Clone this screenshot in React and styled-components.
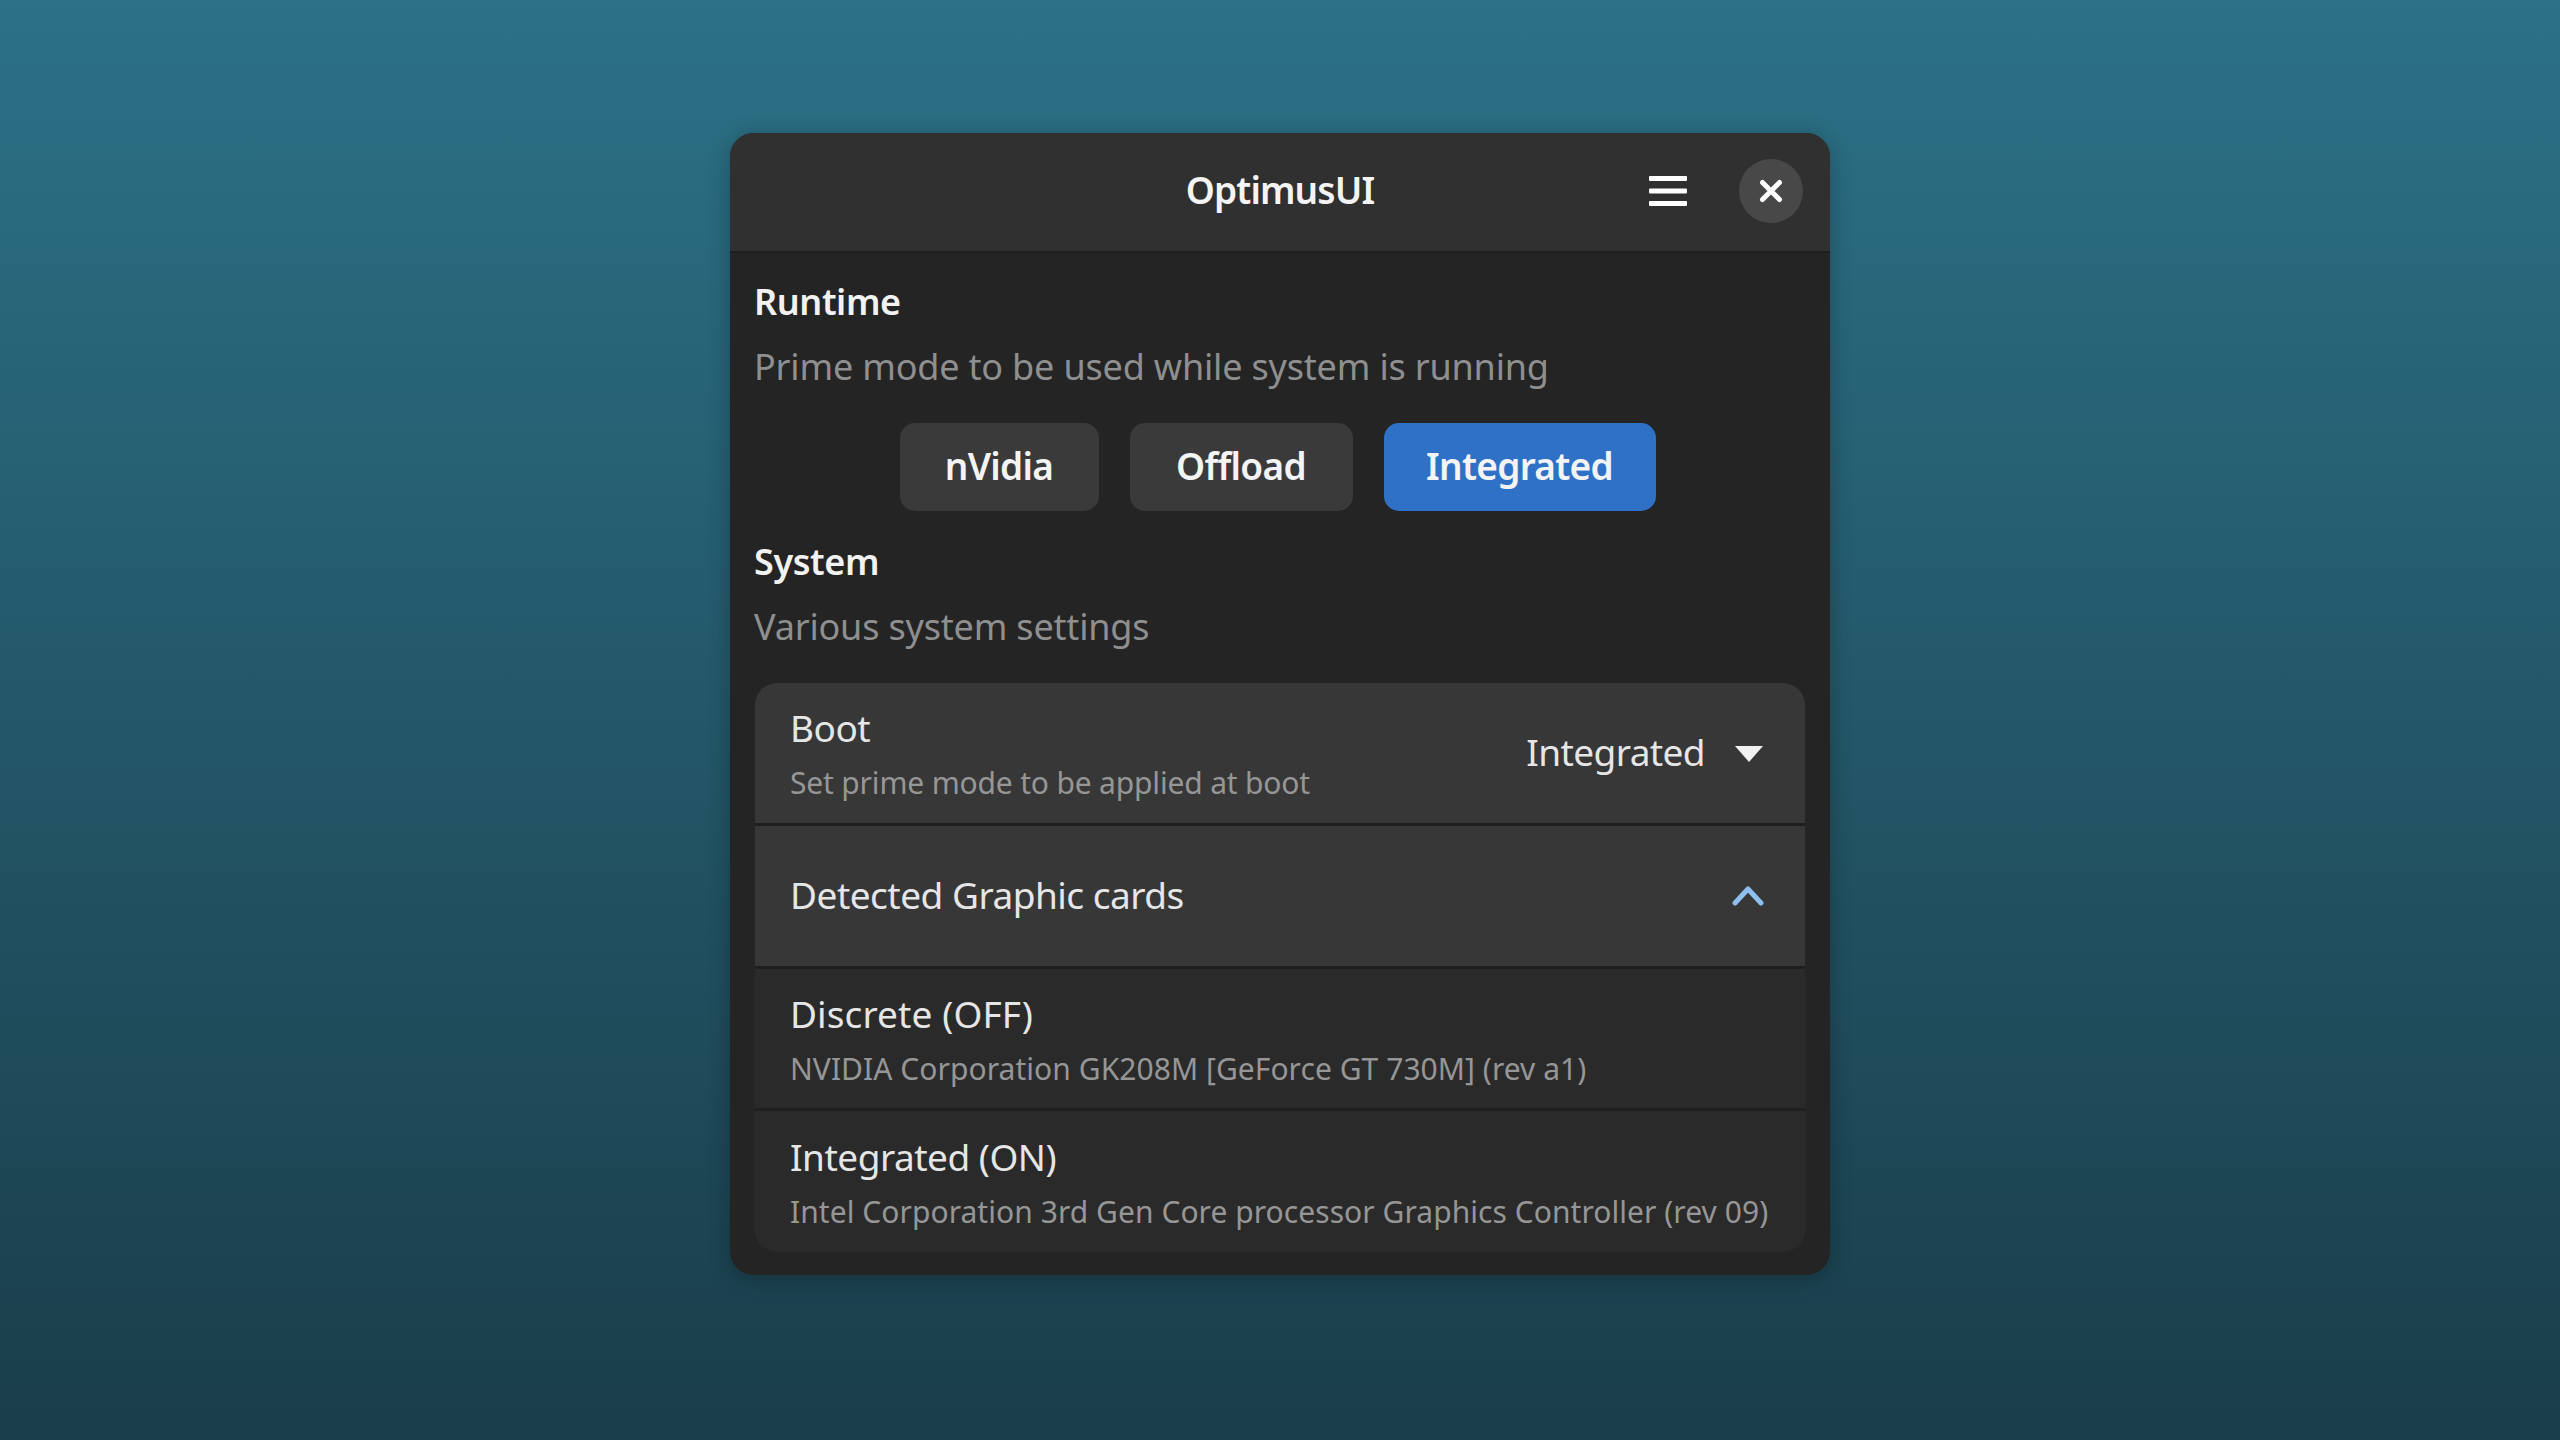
import React from "react";
import styled, { createGlobalStyle } from "styled-components";

const Global = createGlobalStyle`
  html, body { margin: 0; padding: 0; }
  body { font-family: "Noto Sans", "Open Sans", sans-serif; }
`;

const Desktop = styled.div`
  width: 2560px;
  height: 1440px;
  box-sizing: border-box;
  padding-top: 133px;
  display: flex;
  justify-content: center;
  align-items: flex-start;
  background: linear-gradient(180deg, #2c7187 0%, #1a3d4a 100%);
`;

const Window = styled.div`
  width: 1100px;
  height: 1142px;
  border-radius: 24px;
  overflow: hidden;
  background: #242424;
  box-shadow: 0 4px 22px rgba(0, 0, 0, 0.28);
  display: flex;
  flex-direction: column;
`;

const HeaderBar = styled.header`
  height: 120px;
  flex: none;
  box-sizing: border-box;
  padding: 0 27px 2px;
  background: #303030;
  border-bottom: 2px solid #1e1e1e;
  display: grid;
  grid-template-columns: 1fr auto 1fr;
  align-items: center;
`;

const Title = styled.h1`
  grid-column: 2;
  margin: 0 0 3px;
  font-size: 37px;
  font-weight: 600;
  letter-spacing: -0.9px;
  color: #f4f4f4;
`;

const HeaderActions = styled.div`
  grid-column: 3;
  justify-self: end;
  display: flex;
  align-items: center;
  gap: 52px;
`;

const IconOnly = styled.button`
  border: 0;
  padding: 0;
  background: none;
  display: flex;
  color: #fff;
`;

const CloseButton = styled.button`
  width: 64px;
  height: 64px;
  border: 0;
  padding: 0;
  border-radius: 50%;
  background: #484848;
  display: flex;
  align-items: center;
  justify-content: center;
`;

const Content = styled.main`
  flex: 1;
  padding: 26px 25px 23px;
  display: flex;
  flex-direction: column;
`;

const SectionTitle = styled.h2`
  margin: 0 0 0 -1px;
  font-size: 36px;
  line-height: 46px;
  font-weight: 600;
  letter-spacing: -0.4px;
  color: #f2f2f2;
`;

const SectionHint = styled.p`
  margin: 19px 0 0 -1px;
  font-size: 36px;
  line-height: 46px;
  letter-spacing: -0.18px;
  color: #8f8f8f;
`;

const ModeRow = styled.div`
  margin: 33px 0 28px;
  padding-right: 4px;
  display: flex;
  justify-content: center;
  gap: 31px;
`;

const ModeButton = styled.button`
  height: 88px;
  padding: 0 1px 3px 0;
  width: ${(p) => p.$w}px;
  border: 0;
  border-radius: 15px;
  font-family: inherit;
  font-size: 37px;
  font-weight: 600;
  letter-spacing: -0.7px;
  color: #f4f4f4;
  background: ${(p) => (p.$active ? "#3071c8" : "#3a3a3a")};
`;

const List = styled.section`
  margin-top: 33px;
  height: 569px;
  border-radius: 22px;
  overflow: hidden;
  display: flex;
  flex-direction: column;
`;

const Row = styled.div`
  height: ${(p) => p.$h}px;
  flex: none;
  box-sizing: border-box;
  padding: ${(p) => p.$top || 0}px 41px ${(p) => p.$bottom || 0}px 35px;
  display: flex;
  align-items: center;
  justify-content: space-between;
  background: ${(p) => (p.$sunken ? "#2a2a2a" : "#373737")};
  & + & { border-top: 3px solid #1f1f1f; }
`;

const RowText = styled.div`
  display: flex;
  flex-direction: column;
  gap: 14px;
`;

const RowTitle = styled.div`
  font-size: 37px;
  line-height: 44px;
  letter-spacing: ${(p) => (p.$wide ? "0.1px" : "-0.5px")};
  color: #e6e6e6;
`;

const RowSub = styled.div`
  font-size: 30px;
  line-height: 38px;
  letter-spacing: ${(p) => (p.$tight ? "-0.17px" : "0.05px")};
  color: #969696;
  white-space: nowrap;
`;

const Select = styled.div`
  display: flex;
  align-items: center;
  gap: 29px;
  margin-bottom: 6px;
  font-size: 37px;
  letter-spacing: -0.6px;
  color: #e6e6e6;
`;

const CaretGlyph = styled.svg`
  margin-top: 5px;
`;

const Hamburger = () => (
  <svg width="38" height="32" viewBox="0 0 38 32" fill="#fff">
    <rect y="1" width="38" height="5" rx="1" />
    <rect y="13.5" width="38" height="5" rx="1" />
    <rect y="26" width="38" height="5" rx="1" />
  </svg>
);

const CloseIcon = () => (
  <svg width="24" height="24" viewBox="0 0 24 24" stroke="#fff" strokeWidth="5" strokeLinecap="round">
    <path d="M3.5 3.5 L20.5 20.5 M20.5 3.5 L3.5 20.5" />
  </svg>
);

const Caret = () => (
  <CaretGlyph width="30" height="18" viewBox="0 0 30 18" fill="#f2f2f2">
    <path d="M1 1 H29 L15 17 Z" />
  </CaretGlyph>
);

const ChevronUp = () => (
  <svg width="32" height="22" viewBox="0 0 32 22" fill="none" stroke="#8fbfee" strokeWidth="5" strokeLinecap="round" strokeLinejoin="round">
    <path d="M3 19 L16 5 L29 19" />
  </svg>
);

export default function App() {
  return (
    <>
      <Global />
      <Desktop>
        <Window>
          <HeaderBar>
            <Title>OptimusUI</Title>
            <HeaderActions>
              <IconOnly aria-label="Menu"><Hamburger /></IconOnly>
              <CloseButton aria-label="Close"><CloseIcon /></CloseButton>
            </HeaderActions>
          </HeaderBar>
          <Content>
            <SectionTitle>Runtime</SectionTitle>
            <SectionHint>Prime mode to be used while system is running</SectionHint>
            <ModeRow>
              <ModeButton $w={199}>nVidia</ModeButton>
              <ModeButton $w={223}>Offload</ModeButton>
              <ModeButton $w={272} $active>Integrated</ModeButton>
            </ModeRow>
            <SectionTitle>System</SectionTitle>
            <SectionHint>Various system settings</SectionHint>
            <List>
              <Row $h={140} $top={2}>
                <RowText>
                  <RowTitle>Boot</RowTitle>
                  <RowSub $tight>Set prime mode to be applied at boot</RowSub>
                </RowText>
                <Select>Integrated <Caret /></Select>
              </Row>
              <Row $h={143} $bottom={2}>
                <RowTitle>Detected Graphic cards</RowTitle>
                <ChevronUp />
              </Row>
              <Row $h={142} $top={2} $sunken>
                <RowText>
                  <RowTitle $wide>Discrete (OFF)</RowTitle>
                  <RowSub>NVIDIA Corporation GK208M [GeForce GT 730M] (rev a1)</RowSub>
                </RowText>
              </Row>
              <Row $h={144} $top={2} $sunken>
                <RowText>
                  <RowTitle>Integrated (ON)</RowTitle>
                  <RowSub>Intel Corporation 3rd Gen Core processor Graphics Controller (rev 09)</RowSub>
                </RowText>
              </Row>
            </List>
          </Content>
        </Window>
      </Desktop>
    </>
  );
}
